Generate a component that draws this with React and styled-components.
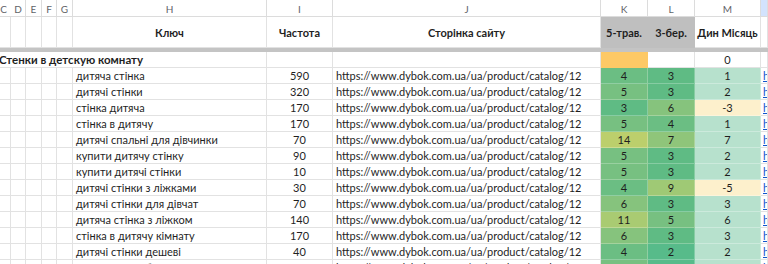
import React from 'react'
import styled, { createGlobalStyle } from 'styled-components'

const GlobalStyle = createGlobalStyle`
  html, body { margin: 0; padding: 0; background: #fff; }
  body { font-family: Lato, "Open Sans", sans-serif; color: #1f1f1f; overflow: hidden; }
`

const cols = '11px 15px 16px 15px 16px 194px 66px 268px 47px 47px 66px 1fr'

const Sheet = styled.div`
  width: 768px;
  height: 264px;
  overflow: hidden;
`

const Row = styled.div`
  display: grid;
  grid-template-columns: ${cols};
  height: ${p => p.$h}px;
`

const Cell = styled.div`
  box-sizing: border-box;
  border-right: 1px solid ${p => p.$line || '#e2e2e2'};
  border-bottom: 1px solid ${p => p.$line || '#e2e2e2'};
  background: ${p => p.$bg || '#fff'};
  display: flex;
  align-items: center;
  justify-content: ${p => p.$align === 'left' ? 'flex-start' : p.$align === 'right' ? 'flex-end' : 'center'};
  padding: 0 ${p => p.$pad ?? 3}px;
  font-size: 11px;
  font-weight: ${p => p.$bold ? 700 : 400};
  white-space: nowrap;
  overflow: hidden;
  grid-column: ${p => p.$span || 'auto'};
`

const Letter = styled(Cell)`
  font-size: 10px;
  color: #5f6368;
  border-color: #dcdcdc;
  padding-top: 1px;
`

const Freeze = styled.div`
  height: 4px;
  background: #c4c4c4;
`

const Link = styled.span`
  color: #1155cc;
  text-decoration: underline;
`

const Title = styled(Cell)`
  font-size: 11.5px;
  margin-left: -1px;
`

const kl = {
  2: '#57bb8a', 3: '#5fbb84', 4: '#6bbe83', 5: '#77c081', 6: '#86c37d',
  7: '#8fc57a', 9: '#9fc975', 11: '#a9cb72', 14: '#bccf6c',
}

const rows = [
  ['дитяча стінка', 590, 4, 3, 1],
  ['дитячі стінки', 320, 5, 3, 2],
  ['стінка дитяча', 170, 3, 6, -3],
  ['стінка в дитячу', 170, 5, 4, 1],
  ['дитячі спальні для дівчинки', 70, 14, 7, 7],
  ['купити дитячу стінку', 90, 5, 3, 2],
  ['купити дитячі стінки', 10, 5, 3, 2],
  ['дитячі стінки з ліжками', 30, 4, 9, -5],
  ['дитячі стінки для дівчат', 70, 6, 3, 3],
  ['дитяча стінка з ліжком', 140, 11, 5, 6],
  ['стінка в дитячу кімнату', 170, 6, 3, 3],
  ['дитячі стінки дешеві', 40, 4, 2, 2],
  ['дитячі стінки білі', 30, 5, 2, 3],
]

const url = 'https://www.dybok.com.ua/ua/product/catalog/12'
const letters = ['C', 'D', 'E', 'F', 'G', 'H', 'I', 'J', 'K', 'L', 'M', '']

export default function App() {
  return (
    <Sheet>
      <GlobalStyle />
      <Row $h={17}>
        {letters.map((l, i) => (
          <Letter key={i} $align={i === 0 ? 'right' : 'center'} $pad={i === 0 ? 7 : 0}
            $bg={i === 11 ? '#d3e3fd' : '#fff'}>{l}</Letter>
        ))}
      </Row>
      <Row $h={31}>
        <Cell /><Cell /><Cell /><Cell /><Cell />
        <Cell $bold>Ключ</Cell>
        <Cell $bold>Частота</Cell>
        <Cell $bold>Сторінка сайту</Cell>
        <Cell $bold $bg="#bfbfbf" $line="#bfbfbf">5-трав.</Cell>
        <Cell $bold $bg="#bfbfbf" $line="#bfbfbf">3-бер.</Cell>
        <Cell $bold $pad={1}>Дин Місяць</Cell>
        <Cell />
      </Row>
      <Freeze />
      <Row $h={16}>
        <Title $span="1 / 7" $align="left" $pad={0} $bold>Стенки в детскую комнату</Title>
        <Cell />
        <Cell />
        <Cell $bg="#fdc966" $line="#fdc966" />
        <Cell />
        <Cell>0</Cell>
        <Cell />
      </Row>
      {rows.map(([key, freq, k, l, m], i) => (
        <Row $h={16} key={i}>
          <Cell /><Cell /><Cell /><Cell /><Cell />
          <Cell $align="left">{key}</Cell>
          <Cell>{freq}</Cell>
          <Cell $align="left">{url}</Cell>
          <Cell $bg={kl[k]} $line="rgba(255,255,255,0.25)">{k}</Cell>
          <Cell $bg={kl[l]} $line="rgba(255,255,255,0.25)">{l}</Cell>
          <Cell $bg={m < 0 ? '#fdf0cc' : '#b7e1cd'} $line="rgba(255,255,255,0.3)">{m}</Cell>
          <Cell $align="left" $pad={2}><Link>https://www.dybok.com.ua</Link></Cell>
        </Row>
      ))}
    </Sheet>
  )
}
